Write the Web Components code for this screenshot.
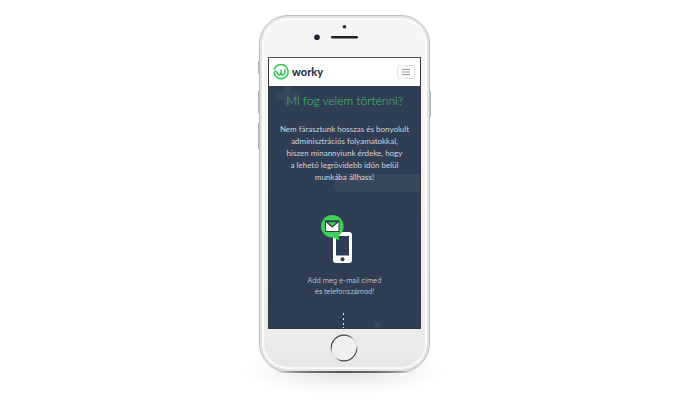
<!DOCTYPE html>
<html lang="hu">
<head>
<meta charset="utf-8">
<meta name="viewport" content="width=device-width, initial-scale=1">
<title>worky</title>
<style>
body { margin: 0; background: #fff; font-family: Lato, "Liberation Sans", sans-serif; }
</style>
</head>
<body>
<device-stage>
  <phone-frame>
    <site-header slot="screen"></site-header>
    <intro-section slot="screen">
      <span slot="title">Mi fog velem történni?</span>
      <span slot="text">Nem fárasztunk hosszas és bonyolult<br>adminisztrációs folyamatokkal,<br>hiszen minannyiunk érdeke, hogy<br>a lehető legrövidebb időn belül<br>munkába állhass!</span>
      <step-item>Add meg e-mail címed<br>és telefonszámod!</step-item>
    </intro-section>
  </phone-frame>
</device-stage>
<script>
const define = (name, html) => customElements.define(name, class extends HTMLElement {
  constructor() {
    super();
    this.attachShadow({ mode: "open" }).innerHTML = html;
  }
});

define("device-stage", `
<style>
:host { display: flex; justify-content: center; padding: 15px 11px 28px 0; }
</style>
<slot></slot>`);

define("phone-frame", `
<style>
:host {
  display: block; position: relative; box-sizing: border-box; width: 100%; max-width: 171px;
  padding: 41px 8px 0; border-radius: 29px;
  background: linear-gradient(#f5f5f5 0%, #f4f4f4 40%, #eaebeb 92%, #e6e7e7 100%);
  border: 1px solid #b9bdbb;
  box-shadow: inset 0 0 0 2px #e1e5e3, inset 0 0 1px 4px #fbfbfb, 0 1px 1px -1px #666;
}
.glow { position: absolute; z-index: -1; left: -18px; right: -18px; bottom: -24px; height: 48px;
  background: radial-gradient(closest-side, rgba(0,0,0,.12), rgba(0,0,0,.04) 60%, transparent); }
.shade { position: absolute; left: 14px; right: 14px; bottom: -2px; height: 2px; border-radius: 50%;
  background: linear-gradient(90deg, transparent, #777 15%, #555 50%, #777 85%, transparent); }
.key { position: absolute; width: 1px; background: #b4b8b6; }
.speaker { position: absolute; top: 7px; left: 0; width: 100%; height: 20px; }
.screen { border: 1px solid #33363b; border-top-color: #55585b; background: #2f3e54; overflow: hidden; }
.bottom { display: flex; justify-content: center; padding: 5px 1px 9px 0; }
button { border: 0; padding: 0; background: none; width: 28px; height: 28px; display: block; border-radius: 50%; }
button svg { display: block; }
</style>
<i class="glow"></i>
<i class="key" style="left:-2px;top:45px;height:13px"></i>
<i class="key" style="left:-2px;top:75px;height:22px"></i>
<i class="key" style="left:-2px;top:107px;height:26px"></i>
<i class="key" style="right:-2px;top:75px;height:26px"></i>
<i class="shade"></i>
<svg class="speaker" viewBox="0 0 169 20">
  <circle cx="84.500" cy="3.700" r="1.800" fill="#23252a"/>
  <circle cx="57" cy="14.300" r="2.800" fill="#171b26"/><circle cx="57" cy="14.300" r="1.200" fill="#26345c"/>
  <rect x="71" y="13" width="27" height="2.600" rx="1.300" fill="#202124"/>
</svg>
<div class="screen"><slot name="screen"></slot></div>
<div class="bottom"><button aria-label="Home">
  <svg width="28" height="28" viewBox="0 0 28 28" fill="none">
    <defs><linearGradient id="ring" x1=".2" y1="0" x2=".8" y2="1">
      <stop offset="0.080" stop-color="#444"/><stop offset=".25" stop-color="#555"/><stop offset=".42" stop-color="#ddd"/><stop offset=".64" stop-color="#ddd"/><stop offset=".8" stop-color="#555"/><stop offset="1" stop-color="#333"/>
    </linearGradient></defs>
    <circle cx="14" cy="14" r="12.800" stroke="url(#ring)" stroke-width="1.200" fill="#eff0f0"/>
  </svg></button></div>`);

define("site-header", `
<style>
:host { display: flex; align-items: center; justify-content: space-between; height: 28px; box-sizing: border-box; padding: 0 5px 0 4px; background: #fff; }
a { display: flex; align-items: center; gap: 3px; color: #24364e; font-size: 11px; line-height: 16px; font-weight: 900; text-decoration: none; }
svg { display: block; }
button { display: flex; align-items: center; justify-content: center; width: 18px; height: 14px; padding: 0; background: #fff; border: 1px solid #e4e4e4; border-radius: 2px; }
</style>
<a href="#"><svg width="16" height="16" viewBox="0 0 16 16" fill="none" stroke="#38c75a" stroke-linecap="round" stroke-linejoin="round">
  <path d="M1.400 5A7.100 7.100 0 1 1 1.200 9.600Q.9 7.500 2.500 7.200C4.200 7 3.900 10.900 6 10.900 7.900 10.900 8.200 9.400 8.200 6.200 8.200 9.400 8.400 10.900 10.100 10.900 11.800 10.900 12.100 9.200 12.100 5.600" stroke-width="1.600"/>
</svg><span>worky</span></a>
<button aria-label="Menü"><svg width="10" height="8" viewBox="0 0 10 8" stroke="#999" stroke-width="1"><path d="M1 1.500h8M1 4h8M1 6.500h8"/></svg></button>`);

define("intro-section", `
<style>
:host { display: flex; flex-direction: column; align-items: center; position: relative; height: 242px; box-sizing: border-box; padding-top: 7px; text-align: center; white-space: nowrap; background: #2f3e54; color: #cfd4db; }
.decor { position: absolute; inset: 0; width: 100%; height: 100%; }
h1, p { position: relative; margin: 0; font-weight: 400; }
h1 { font-size: 12px; line-height: 16px; font-weight: 300; color: #48c96d; }
p { margin-top: 14px; font-size: 8px; line-height: 12px; }
</style>
<svg class="decor" viewBox="0 0 151 242" fill="#38475c" aria-hidden="true">
  <path d="M15 0h7v7h6a3 3 0 0 1 0 7h-6v4a3 3 0 0 1-7 0v-4h-5a3 3 0 0 1 0-7h5z"/>
  <path d="M151 88H71q-6 0-6 6v6q0 6 6 6h80z"/>
  <path d="M106 242v-5a3 3 0 0 1 5 0v5z"/>
</svg>
<h1><slot name="title"></slot></h1>
<p><slot name="text"></slot></p>
<slot></slot>`);

define("step-item", `
<style>
:host { display: flex; flex-direction: column; align-items: center; position: relative; margin-top: 31px; }
svg { display: block; }
.icon { margin-right: 16px; }
p { margin: 12px 0 0; font-family: Inter, "Liberation Sans", sans-serif; font-size: 7px; line-height: 11px; font-weight: 300; }
.dots { margin: 16px 2px 0 0; }
</style>
<svg class="icon" width="33" height="49" viewBox="0 0 33 49">
  <rect x="13" y="18" width="19" height="31" rx="3" fill="#fff"/>
  <rect x="16" y="22" width="13" height="19.500" fill="#2f3e54"/>
  <circle cx="22.500" cy="45.200" r="2" fill="#2f3e54"/>
  <circle cx="12.300" cy="12.300" r="11.300" fill="#3ecf58"/>
  <path d="M12 23l7 3.200-.2-7z" fill="#3ecf58"/>
  <rect x="5.500" y="7" width="13.500" height="10.500" fill="#fff" stroke="#2a3d4c" stroke-width="1"/>
  <path d="M6 7.500 12.300 13 18.500 7.500z" fill="#3ecf58" stroke="#2a3d4c" stroke-width="1.300"/>
</svg>
<p><slot></slot></p>
<svg class="dots" width="3" height="15" viewBox="0 0 3 15" fill="#e3e6ea"><path d="M1 0h1v2H1zM1 5h1v2H1zM1 10h1v2H1zM1 14h1v1H1z"/></svg>`);
</script>
</body>
</html>
